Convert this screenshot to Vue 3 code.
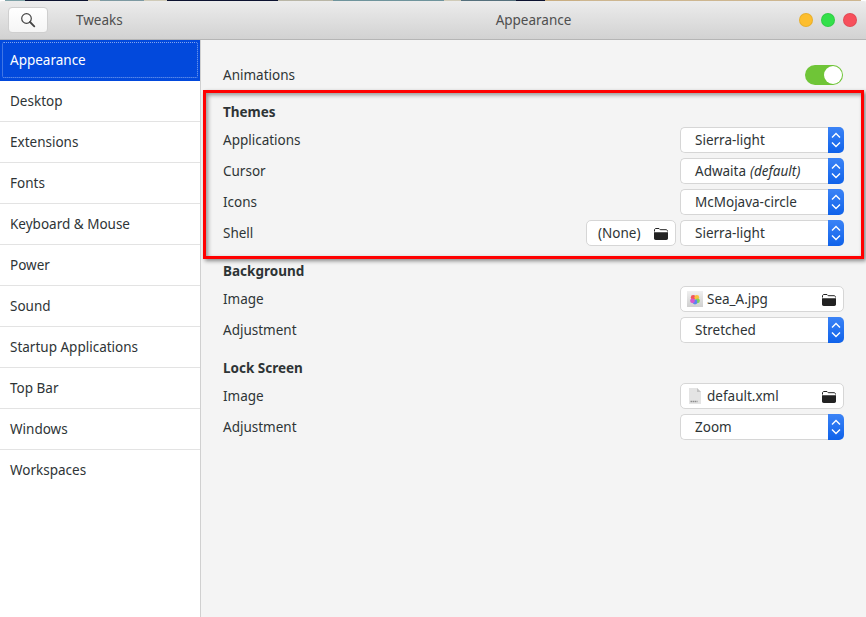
<script setup>
const sidebar = ['Appearance','Desktop','Extensions','Fonts','Keyboard & Mouse','Power','Sound','Startup Applications','Top Bar','Windows','Workspaces']
const themes = [
  { label: 'Applications', value: 'Sierra-light' },
  { label: 'Cursor', value: 'Adwaita', em: '(default)' },
  { label: 'Icons', value: 'McMojava-circle' },
  { label: 'Shell', value: 'Sierra-light', chooser: '(None)' },
]
const chev = 'M2 6.500L6 2.500L10 6.500M2 11.500L6 15.500L10 11.500'
const folderTop = 'M.5 3.500V2C.5 1.100 1.100.5 2 .5h3l1.200 1.200H12c.9 0 1.500.6 1.500 1.500v.3'
const folderBody = 'M0 4.300h14v6c0 1-.7 1.700-1.700 1.700H1.700C.7 12 0 11.300 0 10.300z'
</script>

<template>
  <div class="win">
    <div class="strip"></div>
    <header class="titlebar">
      <button class="search" aria-label="Search">
        <svg width="16" height="16" viewBox="0 0 16 16"><circle cx="6.500" cy="6.500" r="4.800" fill="none" stroke="#444" stroke-width="1.200"/><path d="M10 10l4.300 4.300" stroke="#444" stroke-width="1.800" stroke-linecap="round"/></svg>
      </button>
      <span class="app">Tweaks</span>
      <span class="title">Appearance</span>
      <div class="dots"><i class="y"></i><i class="g"></i><i class="r"></i></div>
    </header>
    <div class="body">
      <nav class="side">
        <div v-for="(s,i) in sidebar" :key="s" class="item" :class="{active:i===0}"><span class="focus" v-if="i===0"></span>{{ s }}</div>
      </nav>
      <main class="main">
        <div class="row anim">
          <span>Animations</span>
          <span class="switch"><span class="knob"></span></span>
        </div>
        <h3 class="head first">Themes</h3>
        <div class="row" v-for="t in themes" :key="t.label">
          <span>{{ t.label }}</span>
          <div class="ctrls">
            <div class="chooser small" v-if="t.chooser">
              <span class="ctext">{{ t.chooser }}</span>
              <svg class="folder" width="14" height="12" viewBox="0 0 14 12"><path :d="folderTop" fill="none" stroke="#222" stroke-width="1"/><path :d="folderBody" fill="#222"/></svg>
            </div>
            <div class="combo">
              <span class="val">{{ t.value }}<em v-if="t.em">{{ t.em }}</em></span>
              <span class="spin"><svg width="12" height="18" viewBox="0 0 12 18"><path :d="chev" fill="none" stroke="#fff" stroke-width="1.400"/></svg></span>
            </div>
          </div>
        </div>
        <h3 class="head">Background</h3>
        <div class="row">
          <span>Image</span>
          <div class="chooser">
            <span class="fbox">
              <svg width="16" height="16" viewBox="0 0 16 16">
                <defs><linearGradient id="tile" x1="0" y1="0" x2="0" y2="1"><stop offset="0" stop-color="#f0f0f0"/><stop offset="1" stop-color="#cfcfcf"/></linearGradient></defs>
                <rect width="16" height="16" fill="url(#tile)"/>
                <circle cx="6.200" cy="6.500" r="2.400" fill="#f4555a"/><circle cx="9.800" cy="6.500" r="2.400" fill="#f9c13f"/><circle cx="10.500" cy="9.800" r="2.400" fill="#7fd35a"/><circle cx="8" cy="11" r="2.400" fill="#5a86f0"/><circle cx="5.500" cy="9.800" r="2.400" fill="#d656cf"/>
              </svg>
            </span>
            <span class="ftext">Sea_A.jpg</span>
            <svg class="folder" width="14" height="12" viewBox="0 0 14 12"><path :d="folderTop" fill="none" stroke="#222" stroke-width="1"/><path :d="folderBody" fill="#222"/></svg>
          </div>
        </div>
        <div class="row">
          <span>Adjustment</span>
          <div class="combo"><span class="val">Stretched</span><span class="spin"><svg width="12" height="18" viewBox="0 0 12 18"><path :d="chev" fill="none" stroke="#fff" stroke-width="1.400"/></svg></span></div>
        </div>
        <h3 class="head">Lock Screen</h3>
        <div class="row">
          <span>Image</span>
          <div class="chooser">
            <span class="fbox">
              <svg width="12" height="16" viewBox="0 0 12 16"><path d="M0 0h8l4 4v12H0z" fill="#e4e4e4"/><path d="M8 0l4 4H8z" fill="#c2c2c2"/><path d="M1.500 13.500h7" stroke="#8e8e8e" stroke-width="1.500" stroke-dasharray="1.500 .5"/></svg>
            </span>
            <span class="ftext">default.xml</span>
            <svg class="folder" width="14" height="12" viewBox="0 0 14 12"><path :d="folderTop" fill="none" stroke="#222" stroke-width="1"/><path :d="folderBody" fill="#222"/></svg>
          </div>
        </div>
        <div class="row">
          <span>Adjustment</span>
          <div class="combo"><span class="val">Zoom</span><span class="spin"><svg width="12" height="18" viewBox="0 0 12 18"><path :d="chev" fill="none" stroke="#fff" stroke-width="1.400"/></svg></span></div>
        </div>
      </main>
    </div>
    <div class="annot"></div>
  </div>
</template>

<style scoped>
.win { position: relative; width: 866px; height: 617px; overflow: hidden; font-family: "Noto Sans", sans-serif; font-size: 13.5px; color: #2e3436; background: #f4f4f4; }
.strip { height: 1px; background: linear-gradient(90deg,#fff 0 5px,#7fa3a8 5px 25px,#0c1230 25px 88px,#c9c3b0 88px 100px,#7d9aa2 100px 144px,#d0cbb8 144px 167px,#0c1230 167px 278px,#b9b6a6 278px 333px,#6f949c 333px 444px,#d0cbb8 444px 461px,#55707c 461px 516px,#0c1230 516px 545px,#c9ae82 545px 580px,#cdb690 580px 861px,#fff 861px); }
.titlebar { position: relative; height: 38px; display: flex; align-items: center; padding: 0 0 0 8px; background: linear-gradient(#ececec,#d2d2d2); border-bottom: 1px solid #b5b5b5; border-radius: 3px 3px 0 0; color: #4f4f4f; }
.search { width: 40px; height: 26px; padding: 0; display: flex; align-items: center; justify-content: center; background: linear-gradient(#fff,#f5f5f5); border: 1px solid #cfcfcf; border-radius: 4px; }
.app { margin-left: 28px; }
.title { position: absolute; left: 201px; right: 0; text-align: center; }
.dots { margin-left: auto; display: flex; gap: 8px; padding-right: 9px; position: relative; }
.dots i { width: 14px; height: 14px; border-radius: 50%; box-sizing: border-box; border: 1px solid rgba(0,0,0,.08); }
.y { background: #fdbe2e; } .g { background: #33e04a; } .r { background: #f7505c; }
.body { display: flex; height: 577px; }
.side { width: 200px; flex: none; background: #fff; border-right: 1px solid #d0d0d0; }
.item { position: relative; height: 40px; line-height: 40px; padding-left: 10px; border-bottom: 1px solid #e3e3e3; }
.item:last-child { border-bottom: 0; }
.item.active { background: #0249dc; color: #fff; border-bottom-color: #0249dc; }
.focus { position: absolute; inset: 2px; border: 1px dotted rgba(255,255,255,.5); border-radius: 2px; }
.main { flex: 1; padding: 21px 22px 0; background: #f4f4f4; }
.row { display: flex; align-items: center; justify-content: space-between; height: 26px; margin-bottom: 5px; }
.row.anim { height: 28px; margin-bottom: 0; }
.ctrls { display: flex; gap: 4px; }
.head { font-size: 13.5px; font-weight: 700; height: 20px; line-height: 20px; margin: 15px 0 5px; }
.head.first { margin-top: 13px; }
.switch { width: 38px; height: 20px; margin-right: 1px; border-radius: 10px; background: #6fc537; position: relative; }
.knob { position: absolute; right: 1px; top: 1px; width: 18px; height: 18px; background: #fff; border-radius: 50%; }
.combo, .chooser { box-sizing: border-box; width: 164px; height: 26px; display: flex; align-items: center; background: #fff; border: 1px solid #d6d6d6; border-radius: 5px; position: relative; }
.combo { border-right: 0; }
.val { flex: 1; padding-left: 14px; white-space: nowrap; }
.val em { font-style: italic; margin-left: 4px; }
.spin { width: 16px; height: 26px; margin-top: -1px; margin-bottom: -1px; display: flex; align-items: center; justify-content: center; background: linear-gradient(#3b83f6,#0f62ea); border-radius: 0 5px 5px 0; }
.folder { margin-top: 1px; }
.chooser { padding: 0 7px 0 6px; }
.chooser.small { width: 90px; padding-left: 11px; }
.ctext { flex: 1; }
.fbox { width: 16px; height: 16px; display: flex; justify-content: center; }
.ftext { flex: 1; margin-left: 4px; }
.annot { position: absolute; left: 203px; top: 90px; width: 661px; height: 169px; box-sizing: border-box; border: 3px solid #f00; box-shadow: 2px 2px 4px rgba(0,0,0,.45), inset 2px 2px 4px rgba(0,0,0,.4); pointer-events: none; }
</style>
